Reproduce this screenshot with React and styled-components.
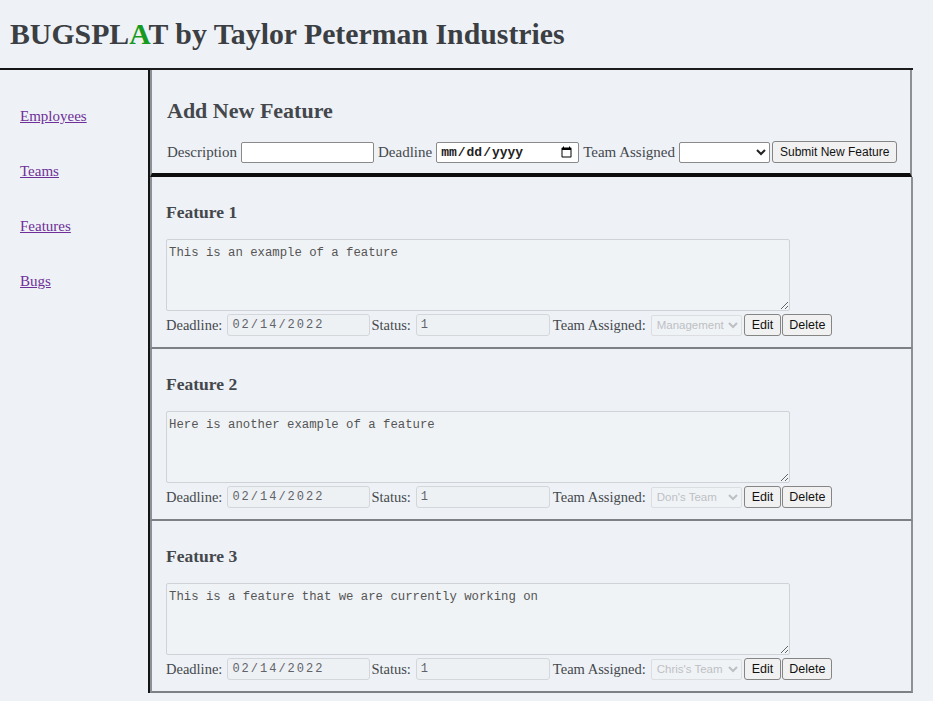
import React from 'react';
import styled, { createGlobalStyle } from 'styled-components';

const features = [
  { id: 1, description: 'This is an example of a feature', deadline: '2022-02-14', status: '1', team: 'Management' },
  { id: 2, description: 'Here is another example of a feature', deadline: '2022-02-14', status: '1', team: "Don's Team" },
  { id: 3, description: 'This is a feature that we are currently working on', deadline: '2022-02-14', status: '1', team: "Chris's Team" },
];

const links = ['Employees', 'Teams', 'Features', 'Bugs'];

const GlobalStyle = createGlobalStyle`
  * { box-sizing: border-box; }
  body {
    margin: 0;
    background: #eef2f6;
    font-family: "Liberation Serif", "Times New Roman", serif;
    color: #45484d;
  }
`;

const Title = styled.h1`
  margin: 0;
  height: 68px;
  padding: 17px 0 0 10px;
  font-size: 29.8px;
  line-height: 34px;
  font-weight: bold;
  color: #3b3e43;
`;

const Green = styled.span`
  color: #189a22;
`;

const Layout = styled.div`
  display: flex;
  align-items: stretch;
`;

const Sidebar = styled.nav`
  width: 150px;
  flex: none;
  border-top: 2px solid #151515;
  border-right: 2px solid #151515;
  padding: 37px 0 0 20px;
  display: flex;
  flex-direction: column;
  gap: 37px;
`;

const NavLink = styled.a`
  font-size: 15px;
  line-height: 18px;
  color: #6f2f98;
  text-decoration: underline;
  cursor: pointer;
`;

const Main = styled.main`
  width: 763px;
  flex: none;
  border-top: 2px solid #1c1c1c;
`;

const AddSection = styled.section`
  border-left: 2px solid #8d9095;
  border-right: 2px solid #8d9095;
  border-bottom: 4px solid #0d0d0d;
  margin-right: 1px;
  padding: 28px 0 10px 15px;
`;

const AddHeading = styled.h2`
  margin: 0 0 17px;
  font-size: 22px;
  line-height: 26px;
  color: #44474c;
`;

const FormRow = styled.div`
  display: flex;
  align-items: center;
  height: 22px;
  font-size: 15px;
  gap: 4px;
`;

const TextInput = styled.input`
  width: ${p => p.$w}px;
  height: 21px;
  border: 1px solid #8a8a8a;
  border-radius: 2px;
  background: #fff;
  padding: 1px 3px;
  font-family: "Liberation Mono", monospace;
  font-size: 13px;
  font-weight: bold;
  color: #222;
`;

const Select = styled.select`
  width: ${p => p.$w}px;
  height: 21px;
  padding: 0 1px;
  border: 1px solid #8a8a8a;
  border-radius: 2px;
  background: #fff;
  font-family: "Liberation Sans", Arial, sans-serif;
  font-size: 11.5px;
  color: #222;
  &:disabled {
    border-color: #d3d5d8;
    background: #f2f4f7;
    color: #a9abae;
  }
`;

const Button = styled.button`
  height: 22px;
  padding: 0 ${p => p.$pad || 6}px;
  margin-left: ${p => p.$gap || 0}px;
  border: 1px solid #858585;
  border-radius: 3px;
  background: #f1f1f1;
  font-family: "Liberation Sans", Arial, sans-serif;
  font-size: ${p => p.$size || 12.5}px;
  color: #111;
`;

const Card = styled.section`
  border-left: 2px solid #8d9095;
  border-right: 2px solid #8d9095;
  border-bottom: 2px solid #7d8085;
  padding: 25px 0 11px 14px;
`;

const CardHeading = styled.h3`
  margin: 0 0 17px;
  font-size: 17.5px;
  line-height: 20px;
  color: #44474c;
`;

const Description = styled.textarea`
  display: block;
  width: 624px;
  height: 72px;
  margin-bottom: 3px;
  padding: 6px 2px 2px;
  border: 1px solid #cfd2d6;
  border-radius: 2px;
  background: #f0f3f6;
  font-family: "Liberation Mono", monospace;
  font-size: 12.3px;
  color: #555;
  resize: vertical;
`;

const DetailRow = styled.div`
  display: flex;
  align-items: center;
  height: 22px;
  font-size: 14.5px;
`;

const Field = styled.label`
  display: flex;
  align-items: center;
  gap: 5px;
  margin-right: ${p => p.$after || 1}px;
`;

const ReadOnly = styled.input`
  width: ${p => p.$w}px;
  height: 22px;
  border: 1px solid #d3d6da;
  border-radius: 3px;
  background: #eef1f4;
  padding: 1px 4px;
  font-family: "Liberation Mono", monospace;
  font-size: 12px;
  letter-spacing: 2px;
  color: #60636a;
`;

const Actions = styled.div`
  display: flex;
  gap: 1px;
  margin-left: 1px;
`;

const formatDate = d => {
  const [y, m, day] = d.split('-');
  return `${m}/${day}/${y}`;
};

const FeatureCard = ({ feature }) => (
  <Card>
    <CardHeading>Feature {feature.id}</CardHeading>
    <Description defaultValue={feature.description} disabled />
    <DetailRow>
      <Field>
        Deadline:
        <ReadOnly $w={143} value={formatDate(feature.deadline)} disabled readOnly />
      </Field>
      <Field $after={3}>
        Status:
        <ReadOnly $w={134} value={feature.status} disabled readOnly />
      </Field>
      <Field>
        Team Assigned:
        <Select $w={91} disabled defaultValue={feature.team}>
          <option>{feature.team}</option>
        </Select>
      </Field>
      <Actions>
        <Button $pad={7}>Edit</Button>
        <Button>Delete</Button>
      </Actions>
    </DetailRow>
  </Card>
);

export default function App() {
  return (
    <>
      <GlobalStyle />
      <Title>
        BUGSPL<Green>A</Green>T by Taylor Peterman Industries
      </Title>
      <Layout>
        <Sidebar>
          {links.map(l => (
            <NavLink key={l}>{l}</NavLink>
          ))}
        </Sidebar>
        <Main>
          <AddSection>
            <AddHeading>Add New Feature</AddHeading>
            <FormRow>
              Description
              <TextInput $w={133} type="text" />
              Deadline
              <TextInput $w={143} type="date" />
              Team Assigned
              <Select $w={91} defaultValue="">
                <option value=""></option>
              </Select>
              <Button $pad={7} $size={12} $gap={-2}>Submit New Feature</Button>
            </FormRow>
          </AddSection>
          {features.map(f => (
            <FeatureCard key={f.id} feature={f} />
          ))}
        </Main>
      </Layout>
    </>
  );
}
